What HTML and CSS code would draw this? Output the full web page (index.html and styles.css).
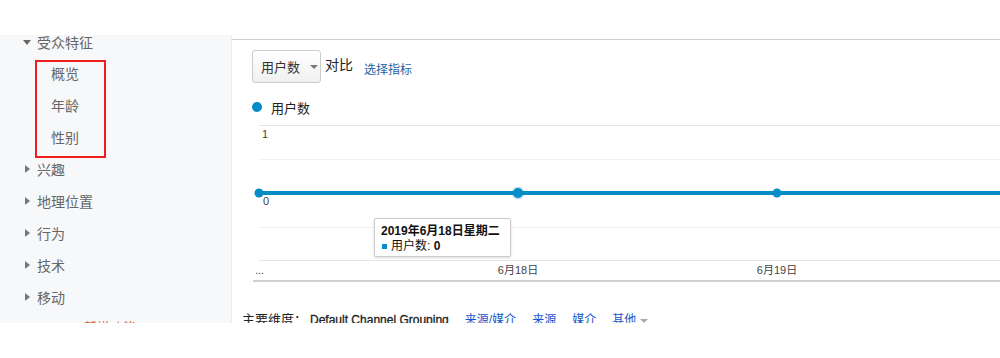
FILE: index.html
```html
<!DOCTYPE html>
<html lang="zh-CN">
<head>
    <meta charset="UTF-8">
    <title>受众特征 - 概览</title>
    <link rel="stylesheet" href="styles.css">
</head>
<body>
    <div class="topbar"></div>

    <div class="page">
        <aside class="sidebar">
            <ul class="nav">
                <li class="nav-item"><span class="caret caret-down"></span>受众特征</li>
            </ul>
            <!-- annotation box around the sub menu -->
            <div class="highlight">
                <ul class="sub-nav">
                    <li>概览</li>
                    <li>年龄</li>
                    <li>性别</li>
                </ul>
            </div>
            <ul class="nav">
                <li class="nav-item"><span class="caret caret-right"></span>兴趣</li>
                <li class="nav-item"><span class="caret caret-right"></span>地理位置</li>
                <li class="nav-item"><span class="caret caret-right"></span>行为</li>
                <li class="nav-item"><span class="caret caret-right"></span>技术</li>
                <li class="nav-item"><span class="caret caret-right"></span>移动</li>
            </ul>
            <a class="help-link" href="#">新增功能</a>
        </aside>

        <main class="content">
            <div class="toolbar">
                <button class="metric-select">用户数<span class="select-caret"></span></button>
                <span class="compare">对比</span>
                <a class="pick-metric" href="#">选择指标</a>
            </div>

            <div class="legend"><span class="legend-dot"></span>用户数</div>

            <div class="chart">
                <svg class="chart-svg" width="768" height="170" viewBox="0 0 768 170">
                    <line x1="27" y1="8.5" x2="768" y2="8.5" stroke="#e6e6e6"/>
                    <line x1="27" y1="42.5" x2="768" y2="42.5" stroke="#f2f2f2"/>
                    <line x1="27" y1="110.5" x2="768" y2="110.5" stroke="#f2f2f2"/>
                    <line x1="27" y1="143.5" x2="768" y2="143.5" stroke="#e6e6e6"/>
                    <line x1="21" y1="164" x2="768" y2="164" stroke="#d0d0d0" stroke-width="2"/>

                    <text class="axis-label" x="30" y="21">1</text>
                    <text class="axis-label" x="31" y="88">0</text>

                    <line x1="27" y1="76" x2="768" y2="76" stroke="#058dc7" stroke-width="4"/>
                    <circle cx="27" cy="76" r="4.5" fill="#058dc7"/>
                    <circle cx="286" cy="76" r="6.5" fill="#058dc7" fill-opacity="0.25"/>
                    <circle cx="286" cy="76" r="5" fill="#058dc7"/>
                    <circle cx="545" cy="76" r="4.5" fill="#058dc7"/>

                    <text class="axis-label" x="23" y="157">...</text>
                    <text class="axis-label" x="286" y="157" text-anchor="middle">6月18日</text>
                    <text class="axis-label" x="545" y="157" text-anchor="middle">6月19日</text>
                </svg>

                <div class="tooltip">
                    <div class="tooltip-title">2019年6月18日星期二</div>
                    <div class="tooltip-row"><span class="tooltip-swatch"></span>用户数:&nbsp;<b>0</b></div>
                </div>
            </div>

            <div class="dimensions">
                <span class="dim-label">主要维度：</span>
                <span class="dim-current">Default Channel Grouping</span>
                <a href="#">来源/媒介</a>
                <a href="#">来源</a>
                <a href="#">媒介</a>
                <a href="#">其他<span class="more-caret"></span></a>
            </div>
        </main>
    </div>
</body>
</html>
```

FILE: styles.css
```css
body {
    margin: 0;
    font-family: "Liberation Sans", Arial, "Noto Sans CJK SC", sans-serif;
    background-color: #fff;
    color: #222;
}
.topbar {
    height: 35px;
    background-color: #fff;
}
.page {
    display: flex;
    height: 288px;
    overflow: hidden;
}

/* sidebar */
.sidebar {
    width: 231px;
    flex-shrink: 0;
    background-color: #f7f8fa;
    border-right: 1px solid #ececec;
}
.nav, .sub-nav {
    list-style: none;
    margin: 0;
    padding: 0;
}
.nav:first-child {
    margin-top: -9px;
}
.nav-item {
    display: flex;
    align-items: center;
    height: 32px;
    padding-left: 37px;
    position: relative;
    font-size: 14px;
    color: #666;
}
.caret {
    position: absolute;
    width: 0;
    height: 0;
}
.caret-down {
    left: 23px;
    top: 14px;
    border-left: 4px solid transparent;
    border-right: 4px solid transparent;
    border-top: 5px solid #666;
}
.caret-right {
    left: 25px;
    top: 12px;
    border-top: 4px solid transparent;
    border-bottom: 4px solid transparent;
    border-left: 5px solid #777;
}
.highlight {
    width: 67px;
    margin: 2px 0 -5px 35px;
    padding-bottom: 2px;
    border: 2px solid #ee1c1c;
}
.sub-nav {
    margin-top: -4px;
}
.sub-nav li {
    height: 32px;
    line-height: 32px;
    padding-left: 14px;
    font-size: 14px;
    color: #666;
}
.help-link {
    display: block;
    margin: 4px 0 0 84px;
    font-size: 13px;
    color: #e8612c;
    text-decoration: none;
}

/* main */
.content {
    flex: 1;
    margin-top: 4px;
    border-top: 1px solid #cfcfcf;
    padding: 10px 0 0 0;
    min-width: 0;
}
.toolbar {
    display: flex;
    align-items: flex-start;
    padding-left: 20px;
}
.metric-select {
    display: flex;
    align-items: center;
    width: 69px;
    height: 33px;
    padding: 0 0 0 8px;
    border: 1px solid #ccc;
    border-radius: 3px;
    background: linear-gradient(#fff, #f0f0f0);
    font-family: inherit;
    font-size: 13px;
    color: #333;
}
.select-caret {
    margin-left: 10px;
    border-left: 4px solid transparent;
    border-right: 4px solid transparent;
    border-top: 4px solid #777;
}
.compare {
    margin: 4px 0 0 4px;
    font-size: 14px;
    color: #222;
}
.pick-metric {
    margin: 10px 0 0 11px;
    font-size: 12px;
    color: #1d62a8;
    text-decoration: none;
}
.legend {
    display: flex;
    align-items: center;
    height: 20px;
    margin-top: 14px;
    padding-left: 20px;
    font-size: 13px;
    color: #222;
}
.legend-dot {
    width: 10px;
    height: 10px;
    border-radius: 50%;
    background-color: #058dc7;
    margin-right: 9px;
}
.chart {
    position: relative;
    height: 170px;
}
.chart-svg {
    display: block;
}
.axis-label {
    font-family: "Liberation Sans", Arial, "Noto Sans CJK SC", sans-serif;
    font-size: 11px;
    fill: #444;
}
.tooltip {
    position: absolute;
    left: 142px;
    top: 101px;
    height: 37px;
    padding: 0 10px 0 6px;
    background-color: #fff;
    border: 1px solid #ccc;
    border-radius: 2px;
    box-shadow: 0 1px 3px rgba(0,0,0,0.15);
    font-size: 12px;
    color: #111;
}
.tooltip-title {
    margin-top: 4px;
    line-height: 16px;
    font-weight: bold;
    white-space: nowrap;
}
.tooltip-row {
    display: flex;
    align-items: center;
    line-height: 14px;
}
.tooltip-swatch {
    width: 5px;
    height: 5px;
    background-color: #058dc7;
    margin: 0 4px 0 1px;
}
.dimensions {
    display: flex;
    align-items: center;
    margin-top: 25px;
    padding-left: 10px;
    font-size: 12px;
    line-height: 16px;
}
.dim-label {
    color: #222;
    margin-right: 3px;
    font-size: 13px;
}
.dim-current {
    color: #222;
    margin-right: 16px;
    -webkit-text-stroke: 0.3px #222;
}
.dimensions a {
    color: #1a56c8;
    text-decoration: none;
    margin-right: 16px;
}
.more-caret {
    display: inline-block;
    margin-left: 4px;
    vertical-align: middle;
    border-left: 4px solid transparent;
    border-right: 4px solid transparent;
    border-top: 4px solid #aaa;
}
```
